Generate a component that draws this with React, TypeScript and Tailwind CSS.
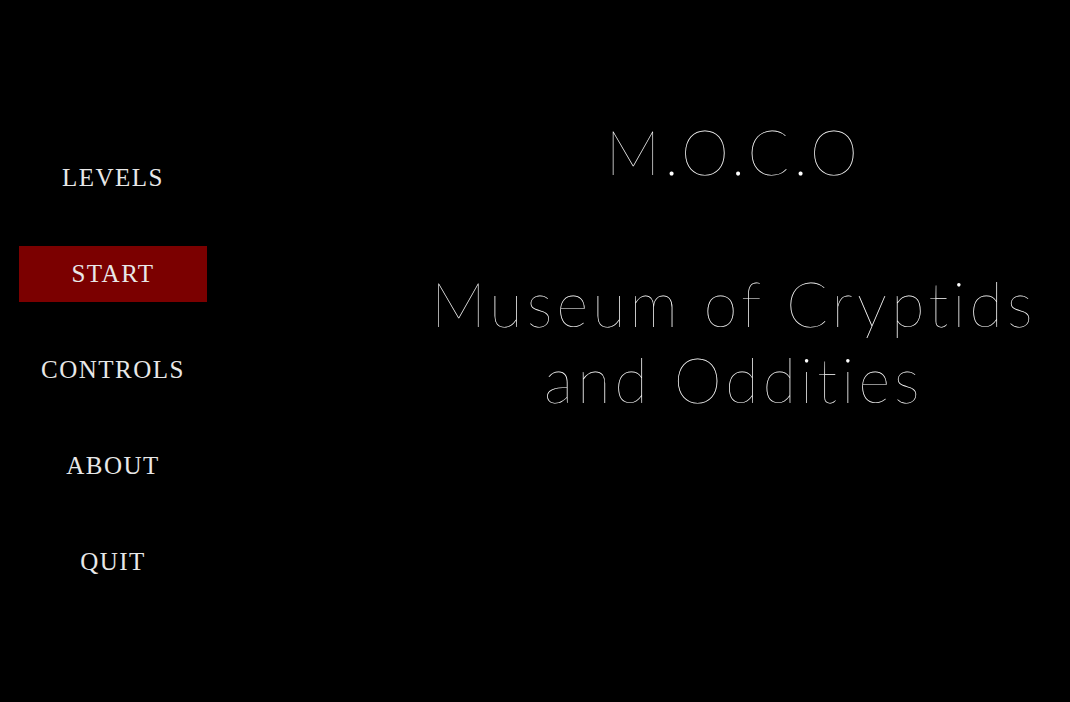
import React, { useState } from 'react';

// ─── Menu ─────────────────────────────────────────────────────────────────────

const MENU = ['LEVELS', 'START', 'CONTROLS', 'ABOUT', 'QUIT'];

const App: React.FC = () => {
  const [active, setActive] = useState('START');

  return (
    <div className="w-[1070px] h-[702px] bg-black flex overflow-hidden">

      {/* Side menu */}
      <nav className="w-[188px] ml-[19px] mt-[150px] flex flex-col gap-[40px]">
        {MENU.map(item => (
          <button
            key={item}
            onMouseEnter={() => setActive(item)}
            className={`h-[56px] w-full flex items-center justify-center text-[25px] tracking-[0.06em] text-[#e8e8e8] font-['Liberation_Serif',serif] ${
              active === item ? 'bg-[#7b0000]' : 'bg-transparent'
            }`}
          >
            {item}
          </button>
        ))}
      </nav>

      {/* Title */}
      <main className="flex-1 pl-[191px] pt-[114px]">
        <h1 className="text-center text-[61px] leading-[76px] tracking-[0.07em] font-thin text-white font-['Lato','Inter',sans-serif]">
          M.O.C.O
          <br />
          <br />
          Museum of Cryptids
          <br />
          and Oddities
        </h1>
      </main>
    </div>
  );
};

export default App;
